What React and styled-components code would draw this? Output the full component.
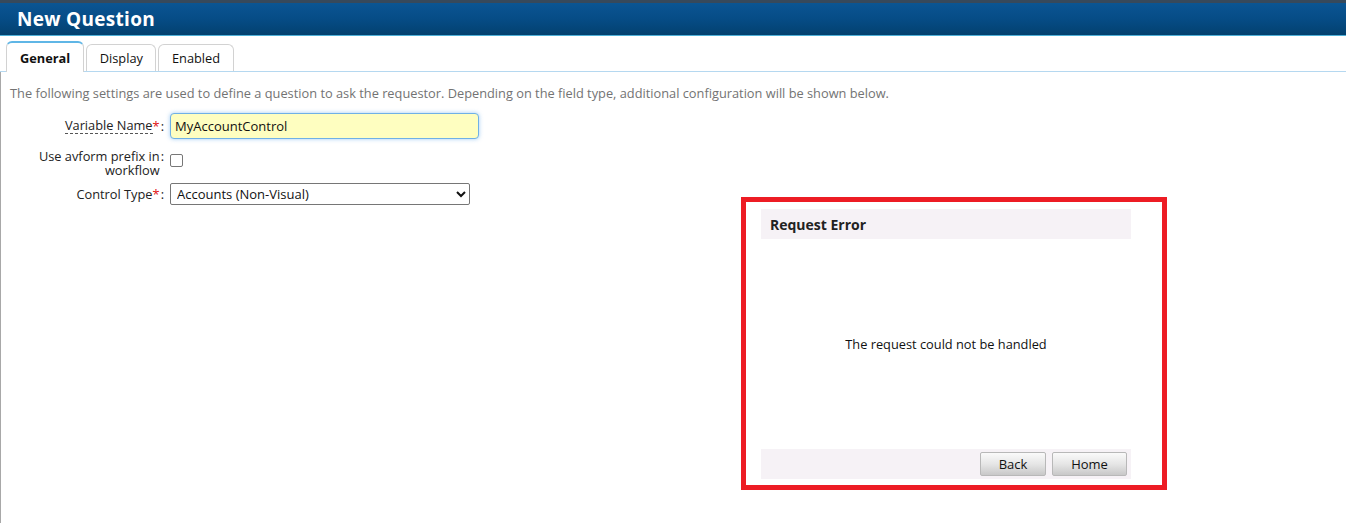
import React from 'react';
import styled, { createGlobalStyle } from 'styled-components';

const GlobalStyle = createGlobalStyle`
  html, body {
    margin: 0;
    padding: 0;
    background: #fff;
  }
  body {
    font-family: 'Open Sans', 'DejaVu Sans', sans-serif;
    font-size: 12.8px;
    color: #222;
  }
`;

const Page = styled.div`
  position: relative;
  width: 1346px;
  height: 523px;
  overflow: hidden;
`;

const TitleBar = styled.div`
  height: 32px;
  border-top: 3px solid #37495b;
  border-bottom: 1px solid #4fb0d8;
  background: linear-gradient(to bottom, #0b5593 0%, #064c86 50%, #03416f 100%);
  display: flex;
  align-items: center;
  padding-left: 17px;
`;

const Title = styled.h1`
  margin: 0;
  color: #fff;
  font-size: 19px;
  font-weight: 700;
  letter-spacing: 0.3px;
`;

const TabBar = styled.div`
  display: flex;
  align-items: flex-end;
  gap: 2px;
  padding: 5px 0 0 6px;
  border-bottom: 1px solid #b5d8f0;
`;

const Tab = styled.div`
  height: ${p => (p.active ? '29px' : '26px')};
  padding: 0 ${p => (p.active ? '13px' : '12.5px')};
  display: flex;
  align-items: center;
  border: 1px solid #d2d2d2;
  border-bottom: none;
  border-top: ${p => (p.active ? '2px solid #5fb6e6' : '1px solid #d2d2d2')};
  border-radius: 6px 6px 0 0;
  background: #fff;
  font-weight: ${p => (p.active ? 700 : 400)};
  color: #111;
  margin-bottom: ${p => (p.active ? '-1px' : '0')};
  box-sizing: content-box;
`;

const Content = styled.div`
  border-left: 1px solid #a8a8a8;
  padding: 12px 0 0 9px;
  height: 460px;
`;

const Intro = styled.p`
  margin: 0 0 11px;
  color: #737373;
`;

const Form = styled.div`
  display: grid;
  grid-template-columns: 134px 1fr;
  column-gap: 6px;
  row-gap: 6px;
  margin-left: 20px;
  align-items: center;
`;

const Label = styled.div`
  display: flex;
  justify-content: flex-end;
  align-items: ${p => (p.top ? 'flex-start' : 'center')};
  line-height: ${p => (p.top ? '14px' : '15px')};
  padding-top: ${p => (p.top ? '4px' : '0')};
`;

const LabelText = styled.span`
  text-align: right;
  max-width: 124px;
  ${p => p.hint && 'border-bottom: 1px dashed #555;'}
`;

const Colon = styled.span`
  margin-left: 1px;
`;

const Req = styled.span`
  color: #e01010;
`;

const TextInput = styled.input`
  width: 309px;
  height: 26px;
  box-sizing: border-box;
  border: 1px solid #6fb0e6;
  border-radius: 4px;
  background: #fefec0;
  box-shadow: 0 0 4px rgba(100, 170, 235, 0.6);
  font-family: inherit;
  font-size: 13px;
  padding: 0 4px;
  color: #111;
  outline: none;
`;

const Check = styled.input`
  width: 13px;
  height: 13px;
  margin: 9px 0 0;
  align-self: start;
  appearance: none;
  border: 1px solid #777;
  border-radius: 2px;
  background: #fff;
`;

const Select = styled.select`
  width: 300px;
  height: 22px;
  font-family: inherit;
  font-size: 13px;
  border: 1px solid #767676;
  border-radius: 2px;
  background: #fff;
  color: #111;
  padding: 0 2px;
`;

const ErrorFrame = styled.div`
  position: absolute;
  left: 741px;
  top: 197px;
  width: 426px;
  height: 293px;
  box-sizing: border-box;
  border: 5px solid #ed1c24;
  background: #fff;
  padding: 7px 31px 6px 15px;
  display: flex;
  flex-direction: column;
`;

const PanelBar = styled.div`
  height: 30px;
  flex: none;
  background: #f6f2f6;
  display: flex;
  align-items: center;
  justify-content: ${p => (p.right ? 'flex-end' : 'flex-start')};
  padding: ${p => (p.right ? '0 4px 0 0' : '0 0 0 9px')};
  gap: 6px;
`;

const PanelTitle = styled.span`
  font-weight: 700;
  font-size: 14px;
  color: #222;
`;

const PanelBody = styled.div`
  flex: 1;
  display: flex;
  align-items: center;
  justify-content: center;
  color: #111;
`;

const Button = styled.button`
  width: ${p => p.w}px;
  height: 24px;
  font-family: inherit;
  font-size: 13px;
  color: #111;
  border: 1px solid #b8b8b8;
  border-radius: 2px;
  background: linear-gradient(to bottom, #fafafa 0%, #e6e6e6 50%, #c8c8c8 100%);
  padding: 0;
`;

export default function App() {
  return (
    <Page>
      <GlobalStyle />
      <TitleBar>
        <Title>New Question</Title>
      </TitleBar>
      <TabBar>
        <Tab active>General</Tab>
        <Tab>Display</Tab>
        <Tab>Enabled</Tab>
      </TabBar>
      <Content>
        <Intro>
          The following settings are used to define a question to ask the requestor. Depending on the field type, additional configuration will be shown below.
        </Intro>
        <Form>
          <Label>
            <LabelText hint>Variable Name</LabelText>
            <Req>*</Req>
            <Colon>:</Colon>
          </Label>
          <TextInput defaultValue="MyAccountControl" />
          <Label top>
            <LabelText>Use avform prefix in workflow</LabelText>
            <Colon>:</Colon>
          </Label>
          <Check type="checkbox" />
          <Label>
            <LabelText>Control Type</LabelText>
            <Req>*</Req>
            <Colon>:</Colon>
          </Label>
          <Select defaultValue="accounts">
            <option value="accounts">Accounts (Non-Visual)</option>
          </Select>
        </Form>
      </Content>
      <ErrorFrame>
        <PanelBar>
          <PanelTitle>Request Error</PanelTitle>
        </PanelBar>
        <PanelBody>The request could not be handled</PanelBody>
        <PanelBar right>
          <Button w={66}>Back</Button>
          <Button w={75}>Home</Button>
        </PanelBar>
      </ErrorFrame>
    </Page>
  );
}
